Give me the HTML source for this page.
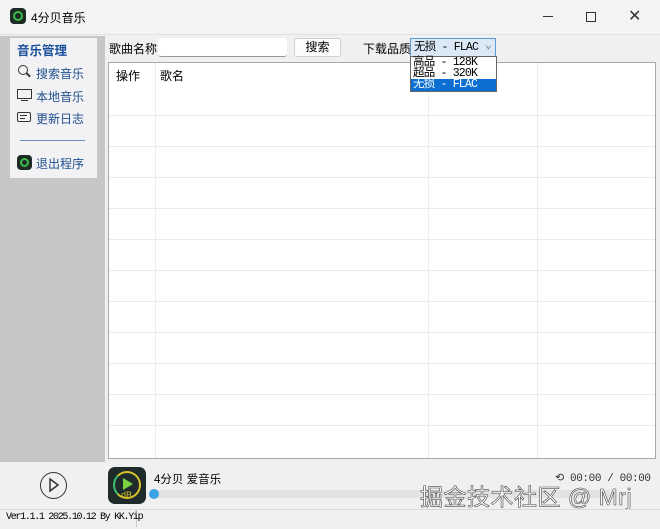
<!DOCTYPE html>
<html><head><meta charset="utf-8"><style>
*{margin:0;padding:0;box-sizing:border-box}
body{width:660px;height:529px;overflow:hidden;background:#f0f0f0;font-family:"Liberation Sans","Noto Sans CJK SC",sans-serif;font-size:12px;color:#000;position:relative}
.a{position:absolute}
.mono{font-family:"Liberation Mono","Noto Sans CJK SC",monospace}
</style></head><body>
<div class="a" style="left:0;top:0;width:660px;height:35px;background:#f3f3f3;border-bottom:1px solid #e2e2e2"></div>
<div class="a" style="left:10px;top:8px;width:16px;height:16px;border-radius:4px;background:#1e2a24"><div class="a" style="left:3px;top:3px;width:10px;height:10px;border-radius:50%;border:2px solid #3dbb4a"></div></div>
<div class="a" style="left:31px;top:9px;font-size:12px">4分贝音乐</div>
<div class="a" style="left:543px;top:16px;width:10px;height:1px;background:#333"></div>
<div class="a" style="left:586px;top:12px;width:10px;height:10px;border:1px solid #333"></div>
<div class="a" style="left:628px;top:6px;font-size:16px;color:#333">✕</div>

<div class="a" style="left:0;top:36px;width:105px;height:426px;background:#c6c6c6"></div>
<div class="a" style="left:10px;top:38px;width:87px;height:140px;background:#f2f2f5"></div>
<div class="a" style="left:17px;top:40px;font-weight:bold;color:#1a4f9c;font-size:12.5px">音乐管理</div>
<div class="a" style="left:18px;top:65px;width:10px;height:10px;border:1.5px solid #333;border-radius:50%"></div>
<div class="a" style="left:26px;top:74px;width:5px;height:1.5px;background:#333;transform:rotate(45deg)"></div>
<div class="a" style="left:36px;top:65px;color:#1f4f8c">搜索音乐</div>
<div class="a" style="left:17px;top:89px;width:15px;height:10px;border:1.3px solid #333"></div>
<div class="a" style="left:21px;top:100px;width:7px;height:1.3px;background:#333"></div>
<div class="a" style="left:36px;top:88px;color:#1f4f8c">本地音乐</div>
<div class="a" style="left:17px;top:112px;width:14px;height:10px;border:1.3px solid #333;border-radius:2px"></div>
<div class="a" style="left:20px;top:115px;width:7px;height:1px;background:#333"></div>
<div class="a" style="left:20px;top:118px;width:5px;height:1px;background:#333"></div>
<div class="a" style="left:36px;top:110px;color:#1f4f8c">更新日志</div>
<div class="a" style="left:20px;top:140px;width:65px;height:1px;background:#6a8fc0"></div>
<div class="a" style="left:17px;top:155px;width:15px;height:15px;border-radius:4px;background:#1e2a24"><div class="a" style="left:3px;top:3px;width:9px;height:9px;border-radius:50%;border:2px solid #3dbb4a"></div></div>
<div class="a" style="left:36px;top:155px;color:#1f4f8c">退出程序</div>

<div class="a" style="left:109px;top:40px">歌曲名称</div>
<div class="a" style="left:158px;top:38px;width:129px;height:19px;background:#fff;border-bottom:1px solid #999;border-radius:3px"></div>
<div class="a" style="left:294px;top:38px;width:47px;height:19px;background:#fdfdfd;border:1px solid #d0d0d0;border-radius:3px;text-align:center;line-height:17px">搜索</div>
<div class="a" style="left:363px;top:40px">下载品质</div>
<div class="a mono" style="left:410px;top:38px;width:86px;height:19px;background:#dbe9f7;border:1px solid #5b9bd5;font-size:11.5px;line-height:17px;padding-left:3px;letter-spacing:-0.8px">无损 - FLAC<span style="position:absolute;right:4px;top:-2px;color:#777">⌄</span></div>

<div class="a" style="left:108px;top:62px;width:548px;height:397px;background:#fff;border:1px solid #a8a8a8;overflow:hidden">
<svg width="548" height="397" style="position:absolute;left:0;top:0">
<g stroke="#ececec" stroke-width="1">
<line x1="46.5" y1="0" x2="46.5" y2="397"/><line x1="319.5" y1="0" x2="319.5" y2="397"/><line x1="428.5" y1="0" x2="428.5" y2="397"/>
<line x1="0" y1="52.5" x2="548" y2="52.5"/><line x1="0" y1="83.5" x2="548" y2="83.5"/><line x1="0" y1="114.5" x2="548" y2="114.5"/><line x1="0" y1="145.5" x2="548" y2="145.5"/><line x1="0" y1="176.5" x2="548" y2="176.5"/><line x1="0" y1="207.5" x2="548" y2="207.5"/><line x1="0" y1="238.5" x2="548" y2="238.5"/><line x1="0" y1="269.5" x2="548" y2="269.5"/><line x1="0" y1="300.5" x2="548" y2="300.5"/><line x1="0" y1="331.5" x2="548" y2="331.5"/><line x1="0" y1="362.5" x2="548" y2="362.5"/>
</g></svg>
<div class="a" style="left:7px;top:4px">操作</div>
<div class="a" style="left:51px;top:4px">歌名</div>
</div>

<div class="a mono" style="left:410px;top:56px;width:87px;height:36px;background:#fff;border:1px solid #666;font-size:11.5px;line-height:11px;letter-spacing:-0.8px">
<div style="padding-left:2px;height:11px">高品 - 128K</div><div style="padding-left:2px;height:11px">超品 - 320K</div>
<div style="background:#0a6fd0;color:#fff;padding-left:2px;height:12px">无损 - FLAC</div></div>

<div class="a" style="left:40px;top:472px;width:27px;height:27px;border:1.5px solid #333;border-radius:50%"><svg width="24" height="24" style="position:absolute;left:0;top:0"><path d="M9 6 L17 12 L9 18 Z" fill="none" stroke="#333" stroke-width="1.5"/></svg></div>
<div class="a" style="left:108px;top:467px;width:38px;height:37px;border-radius:7px;background:#1f2a2a">
<div class="a" style="left:5px;top:4px;width:28px;height:28px;border-radius:50%;border:2.5px solid #d8c22a;border-left-color:#3bbf6a"></div>
<svg width="38" height="37" style="position:absolute;left:0;top:0"><path d="M15 11 L25 17 L15 23Z" fill="#7bd13e"/></svg>
<div class="a" style="left:13px;top:23px;font-size:9px;color:#d8c22a">dB</div></div>
<div class="a" style="left:154px;top:471px;font-size:11.5px">4分贝 爱音乐</div>
<div class="a" style="left:150px;top:490px;width:460px;height:8px;background:#e3e3e3"></div>
<div class="a" style="left:149px;top:489px;width:10px;height:10px;border-radius:50%;background:#3aa3e3"></div>
<div class="a mono" style="left:555px;top:471px;font-size:11px;color:#333;letter-spacing:-0.4px">⟲ 00:00 / 00:00</div>
<div class="a" style="left:420px;top:478px;font-size:23px;color:#fff;-webkit-text-stroke:0.6px #444;letter-spacing:0.5px">掘金技术社区 @ Mrj</div>

<div class="a" style="left:0;top:509px;width:660px;height:20px;background:#f0f0f0;border-top:1px solid #d8d8d8"></div>
<div class="a" style="left:3px;top:510px;width:134px;height:17px;border-right:1px solid #ccc"></div>
<div class="a mono" style="left:6px;top:512px;font-size:10px;letter-spacing:-1.3px">Ver1.1.1 2025.10.12 By KK.Yip</div>
</body></html>
